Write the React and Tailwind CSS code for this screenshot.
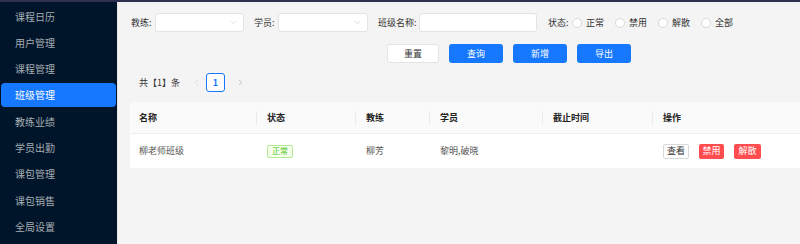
import React from "react";
import { ChevronDown, ChevronLeft, ChevronRight } from "lucide-react";

const menu = ["课程日历", "用户管理", "课程管理", "班级管理", "教练业绩", "学员出勤", "课包管理", "课包销售", "全局设置"];

const Select = ({ w }) => (
  <div className={`${w} h-[19px] bg-white border border-[#e3e3e3] rounded-[3px] flex items-center justify-end pr-[5px]`}>
    <ChevronDown size={9} strokeWidth={1.5} className="text-[#c4c4c4]" />
  </div>
);

const Radio = ({ label, first }) => (
  <div className={`flex items-center ${first ? "ml-[0px]" : "ml-[11px]"}`}>
    <span className="w-[10px] h-[10px] rounded-full bg-white border border-[#d9d9d9]" />
    <span className="ml-[4px]">{label}</span>
  </div>
);

const cols = "grid grid-cols-[127px_99px_74px_113px_110px_1fr]";

const App = () => {
  return (
    <div className="w-[800px] h-[244px] flex overflow-hidden border-t-2 border-[#2e3250] font-['Noto_Sans_CJK_SC',sans-serif] text-[9px] text-[#333]">
      {/* Sidebar */}
      <aside className="w-[117px] shrink-0 bg-[#001529] pt-[2px] px-[1px] flex flex-col gap-[2.3px]">
        {menu.map((m) => (
          <div
            key={m}
            className={`h-[24px] rounded-[4px] flex items-center pl-[14px] text-[10px] ${
              m === "班级管理" ? "bg-[#1677ff] text-white" : "text-[#a6adb4]"
            }`}
          >
            {m}
          </div>
        ))}
      </aside>

      {/* Main */}
      <main className="flex-1 bg-[#f4f4f4] border-l border-[#e8e8e8] pl-[12px] pt-[11px]">
        <div className="flex items-center h-[19px] ml-[1px]">
          <span className="w-[24px]">教练:</span>
          <Select w="w-[89px]" />
          <span className="ml-[10px] w-[24px]">学员:</span>
          <Select w="w-[90px]" />
          <span className="ml-[10px] w-[41px]">班级名称:</span>
          <div className="w-[118px] h-[19px] bg-white border border-[#e3e3e3] rounded-[3px]" />
          <span className="ml-[11px] w-[24px]">状态:</span>
          <Radio label="正常" first />
          <Radio label="禁用" />
          <Radio label="解散" />
          <Radio label="全部" />
        </div>

        <div className="flex items-center gap-[10px] mt-[12px] ml-[257px]">
          <button className="w-[52px] h-[19px] bg-white border border-[#e3e3e3] rounded-[3px] text-[#333]">重置</button>
          <button className="w-[54px] h-[19px] bg-[#1677ff] rounded-[3px] text-white">查询</button>
          <button className="w-[54px] h-[19px] bg-[#1677ff] rounded-[3px] text-white">新增</button>
          <button className="w-[54px] h-[19px] bg-[#1677ff] rounded-[3px] text-white">导出</button>
        </div>

        <div className="flex items-center h-[19px] mt-[10px] ml-[9px]">
          <span>共【1】条</span>
          <ChevronLeft size={9} strokeWidth={1.5} className="ml-[12px] text-[#c4c4c4]" />
          <span className="ml-[5px] w-[19px] h-[19px] bg-white border border-[#1677ff] rounded-[3px] flex items-center justify-center text-[#1677ff] font-semibold">
            1
          </span>
          <ChevronRight size={9} strokeWidth={1.5} className="ml-[11px] text-[#999]" />
        </div>

        <div className="mt-[10px] bg-white">
          <div className={`${cols} h-[32px] bg-[#fafafa] border-b border-[#f0f0f0] font-semibold text-[#222]`}>
            {["名称", "状态", "教练", "学员", "截止时间", "操作"].map((h, i) => (
              <div key={h} className={`relative flex items-center ${i === 0 ? "pl-[9px]" : "pl-[10px]"}`}>
                {h}
                {i < 5 && <span className="absolute right-0 top-[9px] h-[14px] w-px bg-[#ececec]" />}
              </div>
            ))}
          </div>
          <div className={`${cols} h-[34px] text-[#555]`}>
            <div className="flex items-center pl-[9px]">柳老师班级</div>
            <div className="flex items-center pl-[10px]">
              <span className="h-[13px] px-[4px] flex items-center bg-[#f6ffed] border border-[#b7eb8f] rounded-[2px] text-[#52c41a] text-[8px]">
                正常
              </span>
            </div>
            <div className="flex items-center pl-[10px]">柳芳</div>
            <div className="flex items-center pl-[10px]">黎明,破晓</div>
            <div />
            <div className="flex items-center pl-[10px] gap-[10px]">
              <span className="h-[15px] w-[26px] flex items-center justify-center bg-white border border-[#d9d9d9] rounded-[2px] text-[#333]">查看</span>
              <span className="h-[15px] w-[25px] flex items-center justify-center bg-[#ff4d4f] rounded-[2px] text-white">禁用</span>
              <span className="h-[15px] w-[27px] flex items-center justify-center bg-[#ff4d4f] rounded-[2px] text-white">解散</span>
            </div>
          </div>
        </div>
      </main>
    </div>
  );
};

export default App;
